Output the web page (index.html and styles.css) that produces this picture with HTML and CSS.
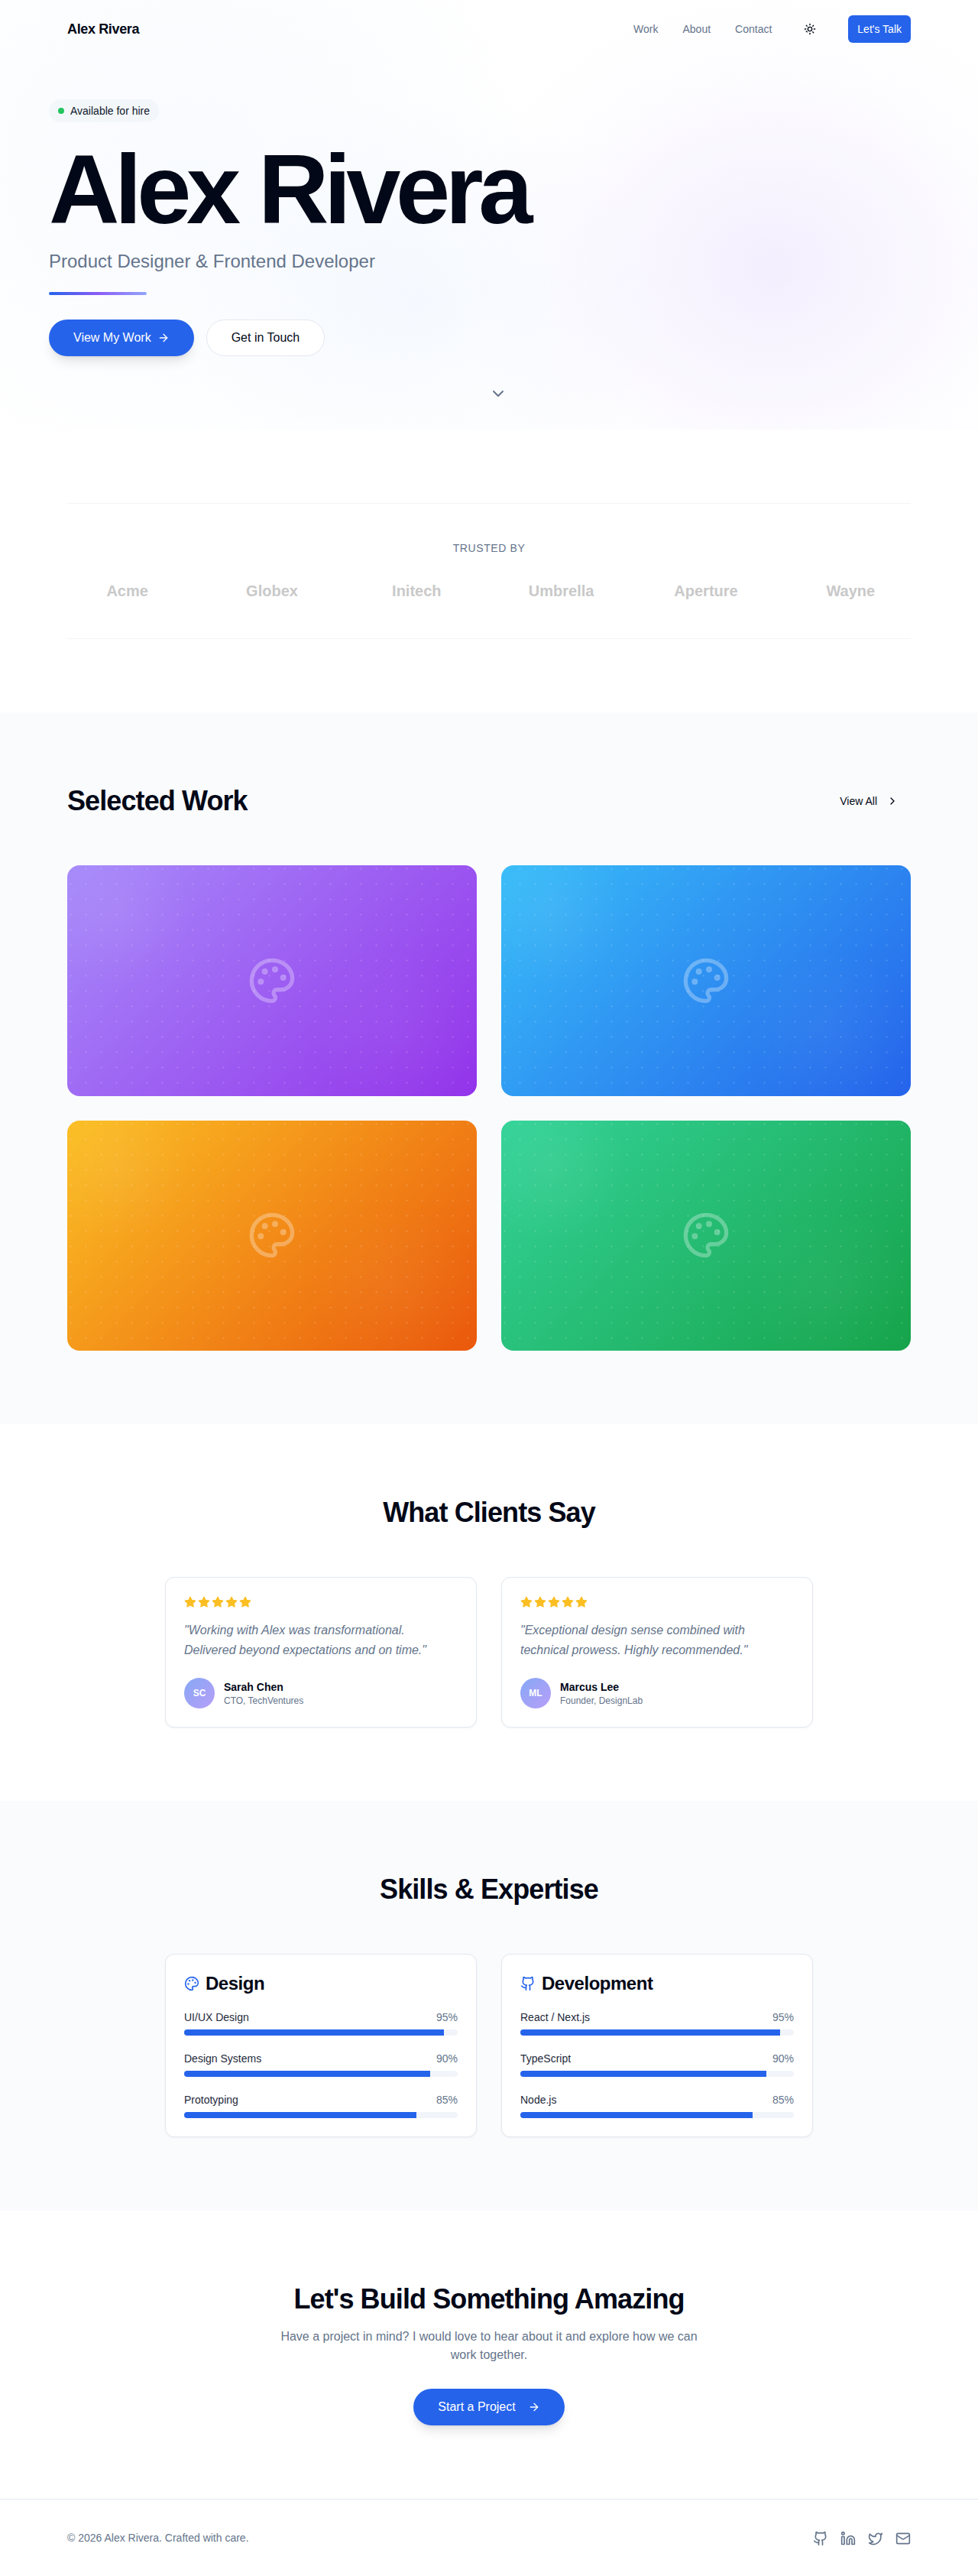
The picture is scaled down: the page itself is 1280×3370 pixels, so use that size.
FILE: index.html
```html
<!DOCTYPE html>
<html lang="en">
<head>
<meta charset="utf-8">
<title>Alex Rivera</title>
<link rel="stylesheet" href="styles.css">
</head>
<body>
<svg class="defs" width="0" height="0" aria-hidden="true">
  <symbol id="i-palette" viewBox="0 0 24 24"><circle cx="13.5" cy="6.5" r=".5" fill="currentColor"/><circle cx="17.5" cy="10.5" r=".5" fill="currentColor"/><circle cx="8.5" cy="7.5" r=".5" fill="currentColor"/><circle cx="6.5" cy="12.5" r=".5" fill="currentColor"/><path d="M12 2C6.5 2 2 6.5 2 12s4.5 10 10 10c.926 0 1.648-.746 1.648-1.688 0-.437-.18-.835-.437-1.125-.29-.289-.438-.652-.438-1.125a1.64 1.64 0 0 1 1.668-1.668h1.996c3.051 0 5.555-2.503 5.555-5.554C21.965 6.012 17.461 2 12 2z"/></symbol>
  <symbol id="i-arrow" viewBox="0 0 24 24"><path d="M5 12h14"/><path d="m12 5 7 7-7 7"/></symbol>
  <symbol id="i-github" viewBox="0 0 24 24"><path d="M15 22v-4a4.8 4.8 0 0 0-1-3.5c3 0 6-2 6-5.5.08-1.25-.27-2.48-1-3.5.28-1.15.28-2.35 0-3.5 0 0-1 0-3 1.5-2.64-.5-5.36-.5-8 0C6 2 5 2 5 2c-.3 1.15-.3 2.35 0 3.5A5.403 5.403 0 0 0 4 9c0 3.5 3 5.5 6 5.5-.39.49-.68 1.05-.85 1.65-.17.6-.22 1.23-.15 1.85v4"/><path d="M9 18c-4.51 2-5-2-7-2"/></symbol>
  <symbol id="i-star" viewBox="0 0 24 24"><polygon points="12 2 15.09 8.26 22 9.27 17 14.14 18.18 21.02 12 17.77 5.82 21.02 7 14.14 2 9.27 8.91 8.26 12 2"/></symbol>
</svg>

<div class="top">
  <header class="nav">
    <a class="logo">Alex Rivera</a>
    <nav class="nav-links">
      <a class="nav-link">Work</a>
      <a class="nav-link">About</a>
      <a class="nav-link">Contact</a>
      <button class="theme-btn" aria-label="Toggle theme">
        <svg class="icon i16" viewBox="0 0 24 24"><circle cx="12" cy="12" r="4"/><path d="M12 2v2"/><path d="M12 20v2"/><path d="m4.93 4.93 1.41 1.41"/><path d="m17.66 17.66 1.41 1.41"/><path d="M2 12h2"/><path d="M20 12h2"/><path d="m6.34 17.66-1.41-1.41"/><path d="m19.07 4.93-1.41 1.41"/></svg>
      </button>
      <a class="nav-cta">Let's Talk</a>
    </nav>
  </header>
  <section class="hero">
    <div class="badge"><span class="dot"></span>Available for hire</div>
    <h1 class="hero-title">Alex Rivera</h1>
    <p class="hero-sub">Product Designer &amp; Frontend Developer</p>
    <div class="accent"></div>
    <div class="hero-actions">
      <a class="btn btn-primary">View My Work <svg class="icon i16"><use href="#i-arrow"/></svg></a>
      <a class="btn btn-outline">Get in Touch</a>
    </div>
    <svg class="icon scroll-hint" viewBox="0 0 24 24"><path d="m6 9 6 6 6-6"/></svg>
  </section>
</div>

<section class="trusted">
  <div class="trusted-inner">
    <p class="trusted-label">TRUSTED BY</p>
    <div class="logos">
      <span class="brand">Acme</span>
      <span class="brand">Globex</span>
      <span class="brand">Initech</span>
      <span class="brand">Umbrella</span>
      <span class="brand">Aperture</span>
      <span class="brand">Wayne</span>
    </div>
  </div>
</section>

<section class="section tinted">
  <div class="work-head">
    <h2 class="h2">Selected Work</h2>
    <a class="view-all">View All <svg class="icon i16" viewBox="0 0 24 24"><path d="m9 18 6-6-6-6"/></svg></a>
  </div>
  <div class="work-grid">
    <div class="work-card purple"><svg class="icon card-icon"><use href="#i-palette"/></svg></div>
    <div class="work-card blue"><svg class="icon card-icon"><use href="#i-palette"/></svg></div>
    <div class="work-card orange"><svg class="icon card-icon"><use href="#i-palette"/></svg></div>
    <div class="work-card green"><svg class="icon card-icon"><use href="#i-palette"/></svg></div>
  </div>
</section>

<section class="section">
  <h2 class="h2 center">What Clients Say</h2>
  <div class="two-col">
    <article class="card">
      <div class="stars">
        <svg class="star"><use href="#i-star"/></svg><svg class="star"><use href="#i-star"/></svg><svg class="star"><use href="#i-star"/></svg><svg class="star"><use href="#i-star"/></svg><svg class="star"><use href="#i-star"/></svg>
      </div>
      <p class="quote">"Working with Alex was transformational. Delivered beyond expectations and on time."</p>
      <div class="person">
        <span class="avatar">SC</span>
        <div><div class="person-name">Sarah Chen</div><div class="person-role">CTO, TechVentures</div></div>
      </div>
    </article>
    <article class="card">
      <div class="stars">
        <svg class="star"><use href="#i-star"/></svg><svg class="star"><use href="#i-star"/></svg><svg class="star"><use href="#i-star"/></svg><svg class="star"><use href="#i-star"/></svg><svg class="star"><use href="#i-star"/></svg>
      </div>
      <p class="quote">"Exceptional design sense combined with technical prowess. Highly recommended."</p>
      <div class="person">
        <span class="avatar">ML</span>
        <div><div class="person-name">Marcus Lee</div><div class="person-role">Founder, DesignLab</div></div>
      </div>
    </article>
  </div>
</section>

<section class="section tinted">
  <h2 class="h2 center">Skills &amp; Expertise</h2>
  <div class="two-col">
    <article class="card">
      <h3 class="skill-title"><svg class="icon i20 blue-ink"><use href="#i-palette"/></svg>Design</h3>
      <div class="skill"><div class="skill-row"><span>UI/UX Design</span><span class="pct">95%</span></div><div class="track"><div class="fill" style="width:95%"></div></div></div>
      <div class="skill"><div class="skill-row"><span>Design Systems</span><span class="pct">90%</span></div><div class="track"><div class="fill" style="width:90%"></div></div></div>
      <div class="skill"><div class="skill-row"><span>Prototyping</span><span class="pct">85%</span></div><div class="track"><div class="fill" style="width:85%"></div></div></div>
    </article>
    <article class="card">
      <h3 class="skill-title"><svg class="icon i20 blue-ink"><use href="#i-github"/></svg>Development</h3>
      <div class="skill"><div class="skill-row"><span>React / Next.js</span><span class="pct">95%</span></div><div class="track"><div class="fill" style="width:95%"></div></div></div>
      <div class="skill"><div class="skill-row"><span>TypeScript</span><span class="pct">90%</span></div><div class="track"><div class="fill" style="width:90%"></div></div></div>
      <div class="skill"><div class="skill-row"><span>Node.js</span><span class="pct">85%</span></div><div class="track"><div class="fill" style="width:85%"></div></div></div>
    </article>
  </div>
</section>

<section class="section cta">
  <h2 class="h2">Let's Build Something Amazing</h2>
  <p class="cta-text">Have a project in mind? I would love to hear about it and explore how we can work together.</p>
  <a class="btn btn-primary btn-wide">Start a Project <svg class="icon i16"><use href="#i-arrow"/></svg></a>
</section>

<footer class="footer">
  <span class="copy">© 2026 Alex Rivera. Crafted with care.</span>
  <div class="socials">
    <svg class="icon i20"><use href="#i-github"/></svg>
    <svg class="icon i20" viewBox="0 0 24 24"><path d="M16 8a6 6 0 0 1 6 6v7h-4v-7a2 2 0 0 0-2-2 2 2 0 0 0-2 2v7h-4v-7a6 6 0 0 1 6-6z"/><rect width="4" height="12" x="2" y="9"/><circle cx="4" cy="4" r="2"/></svg>
    <svg class="icon i20" viewBox="0 0 24 24"><path d="M22 4s-.7 2.1-2 3.4c1.6 10-9.4 17.3-18 11.6 2.2.1 4.4-.6 6-2C3 15.5.5 9.6 3 5c2.2 2.6 5.6 4.1 9 4-.9-4.2 4-6.6 7-3.8 1.1 0 3-1.2 3-1.2z"/></svg>
    <svg class="icon i20" viewBox="0 0 24 24"><rect width="20" height="16" x="2" y="4" rx="2"/><path d="m22 7-8.97 5.7a1.94 1.94 0 0 1-2.06 0L2 7"/></svg>
  </div>
</footer>
</body>
</html>
```
FILE: styles.css
```css
* { box-sizing: border-box; margin: 0; padding: 0; }
html, body { background: #fff; }
body {
  font-family: "Liberation Sans", Arial, sans-serif;
  color: #020817;
  font-size: 16px;
  line-height: 1.5;
}
a { color: inherit; text-decoration: none; }
.defs { position: absolute; }

.icon { fill: none; stroke: currentColor; stroke-width: 2; stroke-linecap: round; stroke-linejoin: round; flex: none; display: block; }
.i16 { width: 16px; height: 16px; }
.i20 { width: 20px; height: 20px; }
.blue-ink { color: #2563eb; }

/* top */
.top {
  height: 562px;
  background:
    radial-gradient(ellipse 420px 360px at 1010px 350px, rgba(139, 92, 246, .1) 0, rgba(139, 92, 246, .06) 35%, rgba(139, 92, 246, .02) 70%, rgba(139, 92, 246, 0) 100%),
    radial-gradient(ellipse 320px 280px at 555px 400px, rgba(59, 130, 246, .045) 0, rgba(59, 130, 246, .02) 50%, rgba(59, 130, 246, 0) 100%),
    radial-gradient(ellipse 460px 420px at 250px 220px, rgba(59, 130, 246, .035) 0, rgba(59, 130, 246, .018) 50%, rgba(59, 130, 246, 0) 100%),
    #fff;
}
.nav { display: flex; align-items: center; justify-content: space-between; padding: 20px 88px; }
.logo { font-size: 18px; font-weight: 700; letter-spacing: -.36px; line-height: 36px; }
.nav-links { display: flex; align-items: center; gap: 32px; }
.nav-link { font-size: 14px; color: #64748b; line-height: 20px; }
.theme-btn { display: flex; align-items: center; justify-content: center; width: 36px; height: 36px; border: 0; background: none; color: #020817; }
.nav-cta { display: block; height: 36px; line-height: 36px; padding: 0 12px; background: #2563eb; color: #fff; font-size: 14px; border-radius: 6px; }

.hero { position: relative; padding: 54px 64px 0; }
.badge { display: inline-flex; align-items: center; gap: 8px; height: 30px; padding: 0 12px; border-radius: 15px; background: rgba(241, 245, 249, .8); font-size: 14px; color: #0f172a; }
.dot { width: 8px; height: 8px; border-radius: 50%; background: #22c55e; }
.hero-title { margin-top: 24px; font-size: 128px; line-height: 128px; font-weight: 700; letter-spacing: -6.4px; color: #020817; }
.hero-sub { margin-top: 12px; font-size: 24px; line-height: 36px; color: #64748b; }
.accent { margin-top: 22px; width: 128px; height: 4px; border-radius: 2px; background: linear-gradient(90deg, #2563eb, #8b5cf6 50%, #93a5fb); }
.hero-actions { display: flex; gap: 16px; margin-top: 32px; }
.btn { display: inline-flex; align-items: center; gap: 8px; height: 48px; padding: 0 32px; border-radius: 24px; font-size: 16px; }
.btn-primary { background: #2563eb; color: #fff; box-shadow: 0 10px 15px -3px rgba(0, 0, 0, .1), 0 4px 6px -4px rgba(0, 0, 0, .1); }
.btn-outline { background: #fff; border: 1px solid #e2e8f0; color: #020817; }
.btn-wide { gap: 16px; }
.scroll-hint { position: absolute; left: 50%; top: 427px; width: 24px; height: 24px; color: #64748b; }

/* trusted */
.trusted { padding: 96px 88px; }
.trusted-inner { border-top: 1px solid #f1f5f9; border-bottom: 1px solid #f1f5f9; padding: 48px 0; text-align: center; }
.trusted-label { font-size: 14px; line-height: 20px; letter-spacing: .6px; color: #64748b; }
.logos { display: grid; grid-template-columns: repeat(6, 1fr); gap: 32px; margin-top: 32px; }
.brand { font-size: 20px; line-height: 28px; font-weight: 700; color: #c9c9c9; }

/* sections */
.section { padding: 96px 88px; }
.tinted { background: #fafbfd; }
.h2 { font-size: 36px; line-height: 40px; font-weight: 700; letter-spacing: -.9px; color: #020817; }
.center { text-align: center; }

.work-head { display: flex; align-items: center; justify-content: space-between; margin-bottom: 64px; }
.view-all { display: flex; align-items: center; gap: 12px; height: 40px; padding: 0 16px; font-size: 14px; color: #020817; }
.work-grid { display: grid; grid-template-columns: 1fr 1fr; gap: 32px; }
.work-card { position: relative; aspect-ratio: 16 / 9; border-radius: 16px; overflow: hidden; display: flex; align-items: center; justify-content: center; }
.work-card::before {
  content: "";
  position: absolute;
  inset: 0;
  background-image:
    radial-gradient(circle at 4.5px 4.5px, rgba(255, 255, 255, .13) 1px, rgba(255, 255, 255, 0) 1.2px),
    radial-gradient(circle 100px at 12% 20%, rgba(255, 255, 255, .06), rgba(255, 255, 255, 0) 100%),
    radial-gradient(circle 110px at 80% 72%, rgba(255, 255, 255, .035), rgba(255, 255, 255, 0) 100%);
  background-size: 20px 20px, 100% 100%, 100% 100%;
}
.purple { background: linear-gradient(135deg, #a78bfa, #9333ea); }
.blue { background: linear-gradient(135deg, #38bdf8, #2563eb); }
.orange { background: linear-gradient(135deg, #fbbf24, #ea580c); }
.green { background: linear-gradient(135deg, #34d399, #16a34a); }
.card-icon { position: relative; width: 64px; height: 64px; color: rgba(255, 255, 255, .3); }

.two-col { display: grid; grid-template-columns: 1fr 1fr; gap: 32px; width: 848px; margin: 64px auto 0; }
.card { background: #fff; border: 1px solid #e2e8f0; border-radius: 12px; padding: 24px; box-shadow: 0 1px 3px rgba(0, 0, 0, .05); }
.stars { display: flex; gap: 2px; }
.star { width: 16px; height: 16px; fill: #fbbf24; stroke: #fbbf24; stroke-width: 2; stroke-linejoin: round; stroke-linecap: round; }
.quote { margin-top: 16px; font-size: 16px; line-height: 25.6px; font-style: italic; color: #64748b; }
.person { display: flex; align-items: center; gap: 12px; margin-top: 24px; }
.avatar { width: 40px; height: 40px; border-radius: 50%; display: flex; align-items: center; justify-content: center; background: linear-gradient(135deg, #86a8f5, #b89ef9); color: #fff; font-size: 12px; font-weight: 700; }
.person-name { font-size: 14px; line-height: 20px; font-weight: 700; color: #020817; }
.person-role { font-size: 12px; line-height: 16px; color: #64748b; }

.skill-title { display: flex; align-items: center; gap: 8px; font-size: 24px; line-height: 28px; font-weight: 700; letter-spacing: -.48px; color: #020817; margin-bottom: 22px; }
.skill + .skill { margin-top: 22px; }
.skill-row { display: flex; justify-content: space-between; font-size: 14px; line-height: 16px; color: #1e293b; margin-bottom: 8px; }
.pct { color: #64748b; }
.track { height: 8px; border-radius: 4px; background: #f1f5f9; overflow: hidden; }
.fill { height: 100%; background: #2563eb; }

.cta { text-align: center; }
.cta-text { width: 560px; margin: 17px auto 32px; font-size: 16px; line-height: 24px; color: #64748b; }

.footer { display: flex; align-items: center; justify-content: space-between; border-top: 1px solid #e2e8f0; padding: 40px 88px; }
.copy { font-size: 14px; color: #64748b; }
.socials { display: flex; gap: 16px; color: #64748b; }
```
